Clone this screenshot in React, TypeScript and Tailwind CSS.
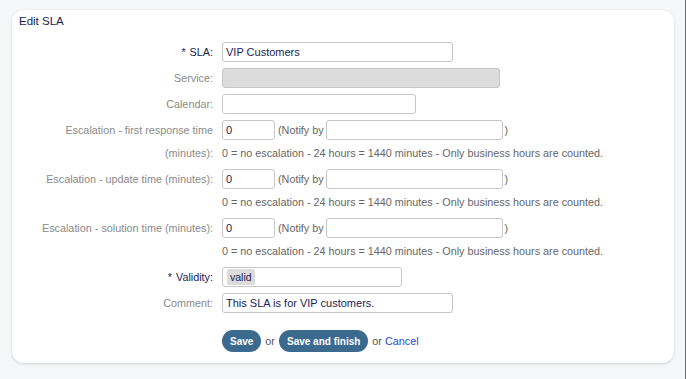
const font = { fontFamily: '"Liberation Sans", Arial, sans-serif' };

const Label = ({ text, required }: { text: string; required?: boolean }) => (
  <div className="h-5 flex items-center justify-end whitespace-nowrap">
    {required ? (
      <span className="text-[#1c1c50]">
        <span className="mr-[4px]">*</span>
        {text}
      </span>
    ) : (
      <span className="text-[#8a8a8a]">{text}</span>
    )}
  </div>
);

const Field = ({ value, width, className = "" }: { value?: string; width: string; className?: string }) => (
  <input
    readOnly
    defaultValue={value}
    className={`h-5 ${width} border border-[#c6c6c6] rounded-[3px] px-[3px] text-[11px] text-[#1c1c50] outline-none ${className}`}
    style={font}
  />
);

const Escalation = ({ first, second }: { first: string; second?: string }) => (
  <>
    <div className="h-5 flex items-center justify-end whitespace-nowrap text-[#8a8a8a]">{first}</div>
    <div className="h-5 flex items-center text-[#666]">
      <Field value="0" width="w-[53px]" />
      <span className="ml-[3px] mr-[2px]">(Notify by</span>
      <Field width="w-[177px]" />
      <span className="ml-[2px]">)</span>
    </div>
    <div className="h-[17px] leading-[14px] text-right text-[#8a8a8a]">{second}</div>
    <div className="h-[17px] leading-[14px] whitespace-nowrap text-[#666]">
      0 = no escalation - 24 hours = 1440 minutes - Only business hours are counted.
    </div>
  </>
);

export default function App() {
  return (
    <div className="w-[686px] h-[379px] bg-[#f5f6f8] border-r border-[#6e6e6e] overflow-hidden text-[10.8px]" style={font}>
      <div className="ml-3 mt-[10px] w-[662px] h-[353px] bg-white rounded-[12px] shadow-[0_1px_3px_rgba(0,0,0,0.14)] pt-[3px]">
        <h1 className="pl-[7px] leading-4 text-[11.5px] text-[#1c1c50]">Edit SLA</h1>
        <div className="mt-[13px] grid grid-cols-[201px_1fr] gap-x-[9px] gap-y-[6px]">
          <Label text="SLA:" required />
          <div><Field value="VIP Customers" width="w-[231px]" /></div>

          <Label text="Service:" />
          <div><div className="h-5 w-[278px] bg-[#dcdcdc] border border-[#c6c6c6] rounded-[3px]" /></div>

          <Label text="Calendar:" />
          <div><Field width="w-[194px]" /></div>

          <Escalation first="Escalation - first response time" second="(minutes):" />
          <Escalation first="Escalation - update time (minutes):" />
          <Escalation first="Escalation - solution time (minutes):" />

          <Label text="Validity:" required />
          <div>
            <div className="h-5 w-[180px] border border-[#c6c6c6] rounded-[3px] flex items-center pl-[4px]">
              <span className="bg-[#dcdcdc] text-[10.5px] text-[#1c1c50] px-[3px] leading-4 rounded-[2px]">valid</span>
            </div>
          </div>

          <Label text="Comment:" />
          <div><Field value="This SLA is for VIP customers." width="w-[231px]" /></div>

          <div />
          <div className="mt-[11px] flex items-center gap-[4px] text-[#555]">
            <button className="h-[22px] px-[8px] rounded-full bg-[#3b6a8f] text-white text-[10px] font-bold">Save</button>
            <span>or</span>
            <button className="h-[22px] px-[8px] rounded-full bg-[#3b6a8f] text-white text-[10px] font-bold">Save and finish</button>
            <span>
              or <span className="text-[#1a4cd8]">Cancel</span>
            </span>
          </div>
        </div>
      </div>
    </div>
  );
}
